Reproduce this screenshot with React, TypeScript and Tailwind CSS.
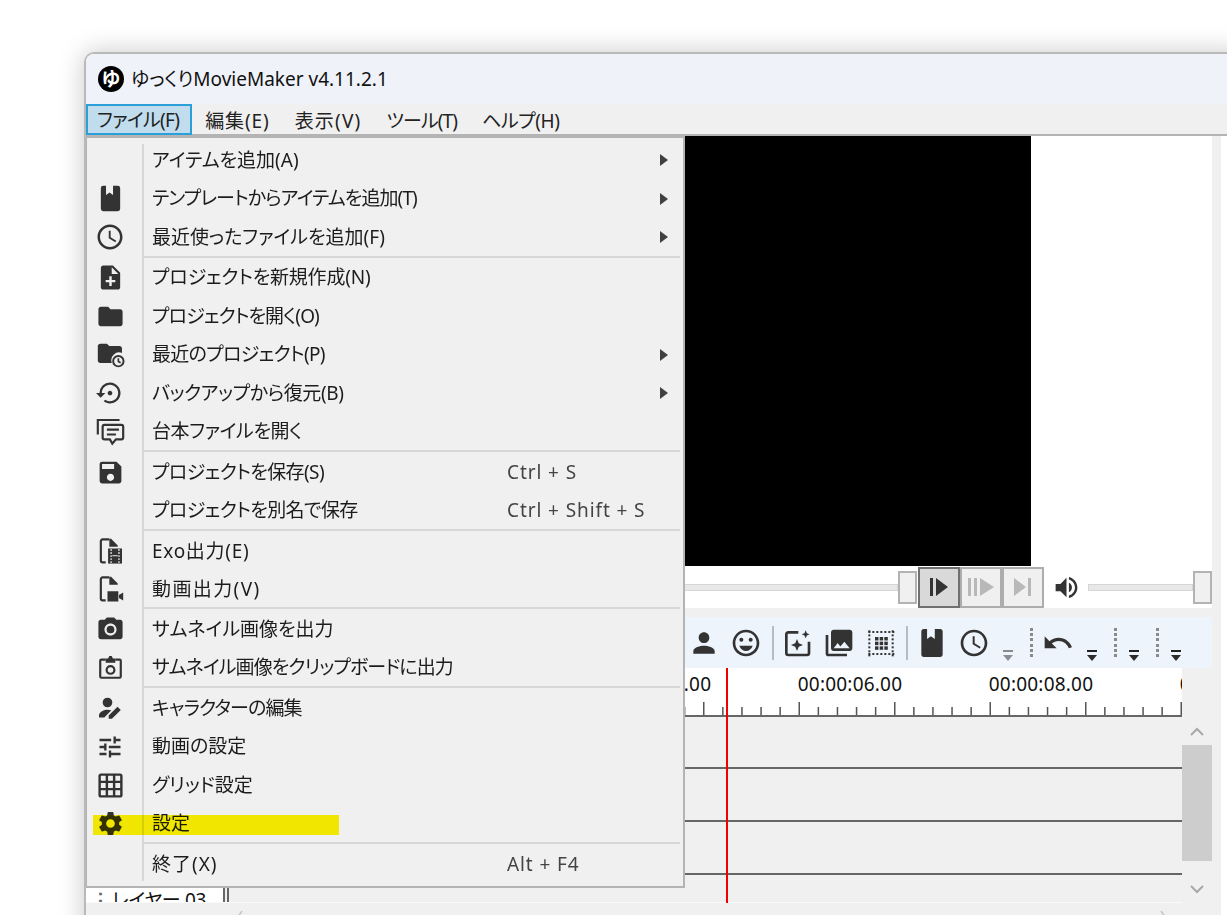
import type { ReactNode } from "react";
import {
  MdAccessTime,
  MdFolder,
  MdGridOn,
  MdNoteAdd,
  MdOutlineEmojiEmotions,
  MdPerson,
  MdPhotoCamera,
  MdPhotoLibrary,
  MdSave,
  MdSettings,
  MdSettingsBackupRestore,
  MdTune,
  MdUndo,
  MdVolumeUp,
} from "react-icons/md";

/* custom icons, 24 grid */
function BookNotch({ size }: { size: number }) {
  return (
    <svg width={size} height={size} viewBox="0 0 24 24" fill="currentColor">
      <path d="M6 1.500h2.300v7.500l2.900-2 2.900 2V1.500H18a2 2 0 0 1 2 2v17a2 2 0 0 1-2 2H6a2 2 0 0 1-2-2v-17a2 2 0 0 1 2-2z" />
    </svg>
  );
}

function FolderClock() {
  return (
    <svg width="29" height="29" viewBox="0 0 24 24" fill="currentColor">
      <path d="M9 3H3.500C2.400 3 1.500 3.900 1.500 5v12c0 1.100.9 2 2 2h9.600a6.500 6.500 0 0 1 8.400-8.300V7c0-1.100-.9-2-2-2h-8.500z" />
      <circle cx="18.500" cy="17.500" r="4.300" fill="none" stroke="currentColor" strokeWidth="1.600" />
      <path d="M18.500 15v2.800l1.900 1.100" fill="none" stroke="currentColor" strokeWidth="1.400" />
    </svg>
  );
}

function ChatLines() {
  return (
    <svg width="29" height="29" viewBox="0 0 24 24" fill="none" stroke="currentColor" strokeWidth="1.800">
      <path d="M19.500 2.500H1.500v12" />
      <path d="M7 6.500h14a1.500 1.500 0 0 1 1.500 1.500v9a1.500 1.500 0 0 1-1.500 1.500h-4.500L13.500 22l-2-3.500H7A1.500 1.500 0 0 1 5.500 17V8A1.500 1.500 0 0 1 7 6.500z" />
      <path d="M9 10.500h10M9 14.500h7.500" />
    </svg>
  );
}

function FileFilm() {
  return (
    <svg width="29" height="29" viewBox="0 0 24 24" fill="none" stroke="currentColor" strokeWidth="1.800">
      <path d="M11 2H5.500A1.500 1.500 0 0 0 4 3.500v16A1.500 1.500 0 0 0 5.500 21H8" />
      <path d="M11 1.500h1.500L18 7v1h-7z" fill="currentColor" stroke="none" />
      <path d="M10 9.500h11.500V22H10z" fill="currentColor" stroke="none" />
      <path d="M12.500 10v12M19 10v12" stroke="#f0f0f0" strokeWidth="1" strokeDasharray="1.500 1" />
      <path d="M13.500 15.500h4.500" stroke="#f0f0f0" strokeWidth="0.800" />
    </svg>
  );
}

function FileCamera() {
  return (
    <svg width="29" height="29" viewBox="0 0 24 24" fill="none" stroke="currentColor" strokeWidth="1.800">
      <path d="M11 2H5.500A1.500 1.500 0 0 0 4 3.500v16A1.500 1.500 0 0 0 5.500 21H8" />
      <path d="M11 1.500h1.500L18 7v1h-7z" fill="currentColor" stroke="none" />
      <path d="M9.500 13.500h9v8.500h-9zM19 16.500l3.500-2v6.500l-3.500-2z" fill="currentColor" stroke="none" />
    </svg>
  );
}

function ClipCamera() {
  return (
    <svg width="29" height="29" viewBox="0 0 24 24" fill="none" stroke="currentColor" strokeWidth="1.800">
      <path d="M8 5.500H4.500a1 1 0 0 0-1 1v13a1 1 0 0 0 1 1h15a1 1 0 0 0 1-1v-13a1 1 0 0 0-1-1H16" />
      <path d="M8 4.500h2l1-2h2l1 2h2V8H8z" fill="currentColor" stroke="none" />
      <circle cx="12" cy="14" r="3.200" />
    </svg>
  );
}

function PersonEdit() {
  return (
    <svg width="29" height="29" viewBox="0 0 24 24" fill="currentColor">
      <circle cx="9.500" cy="7" r="4" />
      <path d="M2.500 19.500v-2c0-2.800 4.400-4.500 7-4.500 1.100 0 2.200.2 3.200.5l-5.800 6z" />
      <path d="M10.500 20.500v-2.700l7.300-7.300 2.700 2.700-7.300 7.300z" />
    </svg>
  );
}

function SparkleBox() {
  return (
    <svg width="32" height="32" viewBox="0 0 24 24" fill="none" stroke="currentColor" strokeWidth="2">
      <path d="M13 4H5.500A1.500 1.500 0 0 0 4 5.500v14A1.500 1.500 0 0 0 5.500 21h14a1.500 1.500 0 0 0 1.500-1.500V11" />
      <path d="M12 9l1.300 3.200 3.200 1.300-3.200 1.300L12 18l-1.300-3.200-3.200-1.300 3.200-1.300zM18.500 2.500l.9 2.100 2.100.9-2.100.9-.9 2.100-.9-2.100-2.100-.9 2.100-.9z" fill="currentColor" stroke="none" />
    </svg>
  );
}

function DotGrid() {
  const cells = [7.5, 11, 14.500];
  const ring = [2.500, 5.500, 8.500, 11.500, 14.500, 17.500, 20.500];
  return (
    <svg width="32" height="32" viewBox="0 0 24 24" fill="currentColor">
      {cells.map((y) => cells.map((x) => <rect key={x + "-" + y} x={x} y={y} width="2.600" height="2.600" />))}
      {ring.map((p) => (
        <g key={p}>
          <rect x={p} y="3" width="1.500" height="1.500" />
          <rect x={p} y="19.500" width="1.500" height="1.500" />
          <rect x="2.500" y={p} width="1.500" height="1.500" />
          <rect x="20" y={p} width="1.500" height="1.500" />
        </g>
      ))}
    </svg>
  );
}

function Arrow() {
  return (
    <svg width="10" height="6" viewBox="0 0 10 6" fill="#2b2b2b" className="block">
      <path d="M0 0h10L5 6z" />
    </svg>
  );
}

function SubArrow() {
  return (
    <svg width="8" height="12" viewBox="0 0 8 12" fill="#404040" className="absolute right-[15px] top-[13px]">
      <path d="M0 0l8 6-8 6z" />
    </svg>
  );
}

type RowProps = { icon?: ReactNode; label: string; fit?: string; shortcut?: string; sub?: boolean; mark?: boolean };

function Row({ icon, label, fit, shortcut, sub, mark }: RowProps) {
  return (
    <div className="relative flex h-[38.5px] items-center">
      <div className="flex w-[46px] shrink-0 items-center justify-center text-[#333]">{icon}</div>
      <div className="w-[19px] shrink-0" />
      <div className={"w-[355px] shrink-0 whitespace-nowrap " + (fit ?? "")}>{label}</div>
      {shortcut && <div className="whitespace-nowrap tracking-[0.9px] text-[#444]">{shortcut}</div>}
      {sub && <SubArrow />}
      {mark && <div className="absolute left-[6px] top-[10px] h-[20px] w-[246px] bg-[#fff500] mix-blend-multiply" />}
    </div>
  );
}

function Sep({ className }: { className?: string }) {
  return <div className={"ml-[56px] mr-[3px] h-[2px] bg-[#d7d7d7] " + (className ?? "-translate-y-px")} />;
}

function FileMenu() {
  return (
    <div className="absolute left-[-1px] top-0 z-20 h-[752px] w-[600px] border-2 border-[#b4b4b4] bg-[#f0f0f0] pt-[3px] text-[19px] leading-none text-[#1c1c1c]">
      <div className="absolute bottom-[5px] left-[55px] top-[6px] w-[2px] bg-[#d7d7d7]" />
      <Row label="アイテムを追加(A)" sub />
      <Row icon={<BookNotch size={29} />} label="テンプレートからアイテムを追加(T)" fit="tracking-[-0.9px]" sub />
      <Row icon={<MdAccessTime size={30} />} label="最近使ったファイルを追加(F)" sub />
      <Sep />
      <Row icon={<MdNoteAdd size={29} />} label="プロジェクトを新規作成(N)" fit="tracking-[-0.2px]" />
      <Row icon={<MdFolder size={29} />} label="プロジェクトを開く(O)" fit="tracking-[-0.9px]" />
      <Row icon={<FolderClock />} label="最近のプロジェクト(P)" fit="tracking-[-0.7px]" sub />
      <Row icon={<MdSettingsBackupRestore size={28} />} label="バックアップから復元(B)" fit="tracking-[-0.4px]" sub />
      <Row icon={<ChatLines />} label="台本ファイルを開く" fit="tracking-[-0.4px]" />
      <Sep />
      <Row icon={<MdSave size={29} />} label="プロジェクトを保存(S)" fit="tracking-[-0.6px]" shortcut="Ctrl + S" />
      <Row label="プロジェクトを別名で保存" fit="tracking-[-0.6px]" shortcut="Ctrl + Shift + S" />
      <Sep />
      <Row icon={<FileFilm />} label="Exo出力(E)" fit="tracking-[0.7px]" />
      <Row icon={<FileCamera />} label="動画出力(V)" fit="tracking-[1.4px]" />
      <Sep className="-translate-y-[2px] mb-[-1px]" />
      <Row icon={<MdPhotoCamera size={29} />} label="サムネイル画像を出力" />
      <Row icon={<ClipCamera />} label="サムネイル画像をクリップボードに出力" fit="tracking-[-0.9px]" />
      <Sep />
      <Row icon={<PersonEdit />} label="キャラクターの編集" fit="tracking-[-0.9px]" />
      <Row icon={<MdTune size={28} />} label="動画の設定" />
      <Row icon={<MdGridOn size={29} />} label="グリッド設定" />
      <Row icon={<MdSettings size={29} />} label="設定" mark />
      <Sep />
      <Row label="終了(X)" fit="tracking-[1px]" shortcut="Alt + F4" />
    </div>
  );
}

function TransportButton({ active, children }: { active?: boolean; children: ReactNode }) {
  return (
    <div
      className={
        active
          ? "flex h-[41px] w-[42px] shrink-0 items-center justify-center border-2 border-[#707070] bg-[#d9d9d9]"
          : "flex h-[41px] w-[42px] shrink-0 items-center justify-center border-2 border-[#adadad] bg-[#f0f0f0]"
      }
    >
      {children}
    </div>
  );
}

function SliderThumb() {
  return <div className="h-[33px] w-[19px] shrink-0 border-2 border-[#b3b3b3] bg-[#f0f0f0]" />;
}

function SliderTrack({ className }: { className: string }) {
  return <div className={"h-[7px] border border-[#d6d6d6] bg-[#e8e8e8] " + className} />;
}

function SeekRow() {
  return (
    <div className="flex h-[42px] items-center bg-white pl-[12px]">
      <SliderTrack className="min-w-0 flex-1" />
      <SliderThumb />
      <div className="w-[1px] shrink-0" />
      <TransportButton active>
        <svg width="18" height="18" viewBox="0 0 18 18" fill="#333">
          <path d="M0 0h3v18H0zM6 0l12 9-12 9z" />
        </svg>
      </TransportButton>
      <TransportButton>
        <svg width="26" height="18" viewBox="0 0 26 18" fill="#b8b8b8">
          <path d="M0 0h3v18H0zM6 0h3v18H6zM12 0l14 9-14 9z" />
        </svg>
      </TransportButton>
      <TransportButton>
        <svg width="18" height="18" viewBox="0 0 18 18" fill="#b8b8b8">
          <path d="M0 0l12 9-12 9zM14 0h3v18h-3z" />
        </svg>
      </TransportButton>
      <div className="flex w-[44px] shrink-0 items-center justify-center text-[#333]">
        <MdVolumeUp size={29} />
      </div>
      <SliderTrack className="w-[105px] shrink-0" />
      <SliderThumb />
    </div>
  );
}

function Grip() {
  return (
    <div className="flex h-[30px] w-[3px] flex-col justify-between">
      {[0, 1, 2, 3, 4, 5].map((n) => (
        <span key={n} className="block h-[3px] w-[3px] bg-[#8a8a8a]" />
      ))}
    </div>
  );
}

function Overflow({ dim, className }: { dim?: boolean; className: string }) {
  return (
    <div className={"flex flex-col items-center self-end pb-[7px] " + className + (dim ? " opacity-50" : "")}>
      <div className="mb-[3px] h-[2px] w-[10px] bg-[#222]" />
      <Arrow />
    </div>
  );
}

function Divider({ className }: { className: string }) {
  return <div className={"h-[34px] w-[2px] shrink-0 bg-[#b5bcc4] " + className} />;
}

function Tool({ children }: { children: ReactNode }) {
  return <div className="flex w-[42px] shrink-0 items-center justify-center">{children}</div>;
}

function Toolbar() {
  return (
    <div className="flex h-[51px] items-center bg-[#eef4fc] pl-[597px] text-[#333]">
      <Tool>
        <MdPerson size={32} />
      </Tool>
      <Tool>
        <MdOutlineEmojiEmotions size={32} />
      </Tool>
      <Divider className="ml-[5px]" />
      <div className="w-[2px]" />
      <Tool>
        <SparkleBox />
      </Tool>
      <Tool>
        <MdPhotoLibrary size={32} />
      </Tool>
      <Tool>
        <DotGrid />
      </Tool>
      <Divider className="ml-[4px]" />
      <div className="w-[3px]" />
      <Tool>
        <BookNotch size={32} />
      </Tool>
      <Tool>
        <MdAccessTime size={32} />
      </Tool>
      <Overflow dim className="ml-[8px]" />
      <div className="w-[17px]" />
      <Grip />
      <div className="w-[4px]" />
      <Tool>
        <MdUndo size={32} />
      </Tool>
      <Overflow className="ml-[8px]" />
      <div className="w-[17px]" />
      <Grip />
      <Overflow className="ml-[12px]" />
      <div className="w-[17px]" />
      <Grip />
      <Overflow className="ml-[12px]" />
    </div>
  );
}

const tickXs = Array.from({ length: 51 }, (_, i) => 139.5 + i * 19.1);

function Ruler() {
  return (
    <div className="relative h-[49px] overflow-hidden border-b-2 border-[#666] bg-white">
      <div className="flex h-[32px] pl-[477.5px] text-[19px] leading-[32px] tracking-[0.2px] text-[#111]">
        {["00:00:04.00", "00:00:06.00", "00:00:08.00", "00:00:10.00"].map((t) => (
          <div key={t} className="w-[191px] shrink-0 whitespace-nowrap text-center">
            {t}
          </div>
        ))}
      </div>
      {/* tick marks */}
      <svg width="1096" height="17" viewBox="0 0 1096 17" className="block">
        {tickXs.map((x, i) => (
          <rect key={i} x={x} y={i % 5 === 0 ? 2 : 7} width="1.500" height={i % 5 === 0 ? 13 : 8} fill="#555" />
        ))}
      </svg>
    </div>
  );
}

function TrackRows() {
  return (
    <div className="flex h-[186px] overflow-hidden border-b border-[#fafafa] bg-[#f0f0f0]">
      <div className="w-[137px] shrink-0">
        {["00", "01", "02", "03"].map((n) => (
          <div key={n} className="flex h-[53px] items-center bg-white pb-[5px] text-[19px] leading-[24px] text-[#111]">
            <span className="ml-[5px] w-[21px] shrink-0 font-bold text-[#666]">⋮</span>
            <span className="whitespace-nowrap tracking-[-0.3px]">レイヤー {n}</span>
          </div>
        ))}
      </div>
      <div className="h-full w-[2px] shrink-0 bg-[#666]" />
      <div className="h-full w-[2px] shrink-0" />
      <div className="h-full w-[2px] shrink-0 bg-[#666]" />
      <div className="-mt-[1px] min-w-0 flex-1">
        {[0, 1, 2].map((n) => (
          <div key={n} className="h-[53px] border-b-2 border-[#666]" />
        ))}
      </div>
    </div>
  );
}

function Chevron({ up }: { up?: boolean }) {
  return (
    <svg width="14" height="9" viewBox="0 0 14 9" fill="none" stroke="#a8a8a8" strokeWidth="2" className="block">
      <path d={up ? "M1 8l6-6 6 6" : "M1 1l6 6 6-6"} />
    </svg>
  );
}

function Timeline() {
  return (
    <div className="flex">
      <div className="relative w-[1096px] shrink-0">
        <Ruler />
        <TrackRows />
        <div className="absolute bottom-0 left-[640px] top-0 w-[2px] bg-[#f00000]" />
      </div>
      <div className="flex w-[30px] shrink-0 flex-col items-center bg-[#f0f0f0] pt-[59px]">
        <Chevron up />
        <div className="mt-[9px] h-[116px] w-full bg-[#cdcdcd]" />
        <div className="mt-[24px]">
          <Chevron />
        </div>
      </div>
    </div>
  );
}

function HScrollHints() {
  return (
    <div className="flex h-[12px] items-start overflow-hidden bg-[#f0f0f0] pl-[150px] pt-[7px]">
      <svg width="8" height="8" viewBox="0 0 8 8" fill="none" stroke="#c4c4c4" strokeWidth="1.500" className="block">
        <path d="M6 1L2 7" />
      </svg>
      <svg width="8" height="8" viewBox="0 0 8 8" fill="none" stroke="#c4c4c4" strokeWidth="1.500" className="ml-[915px] block">
        <path d="M2 1l4 6" />
      </svg>
    </div>
  );
}

export default function App() {
  return (
    <div className="h-[915px] w-[1227px] overflow-hidden bg-white pl-[84px] pt-[52px] font-['Noto_Sans','Noto_Sans_CJK_JP',sans-serif] [font-feature-settings:'palt']">
      <div className="h-[900px] w-[1160px] overflow-hidden rounded-tl-[10px] border-l-2 border-t-2 border-[#b9b9b9] shadow-[0_0_26px_rgba(0,0,0,0.22)]">
        {/* title bar */}
        <div className="flex h-[50px] items-center bg-[#eff2f9] pl-[12px]">
          <div className="flex h-[26px] w-[26px] shrink-0 items-center justify-center rounded-full bg-black text-[19px] font-bold leading-none text-white">
            ゆ
          </div>
          <div className="ml-[7px] whitespace-nowrap text-[19px] leading-none text-[#111]">ゆっくりMovieMaker v4.11.2.1</div>
        </div>
        {/* menu bar */}
        <div className="flex h-[32px] items-start gap-[3px] border-b-2 border-[#b4b4b4] bg-[#f0f0f0] text-[19px] leading-none text-[#222]">
          <div className="flex h-[31px] items-center border-2 border-[#2a9fd8] bg-[#c0dced] pl-[9px] pr-[11px] pt-[2px] tracking-[-0.7px]">ファイル(F)</div>
          <div className="flex h-[31px] items-center pl-[10px] pr-[11px] pt-[4px] tracking-[0.9px]">編集(E)</div>
          <div className="flex h-[31px] items-center px-[11px] pt-[4px] tracking-[1.2px]">表示(V)</div>
          <div className="flex h-[31px] items-center px-[11px] pt-[4px] tracking-[-0.9px]">ツール(T)</div>
          <div className="flex h-[31px] items-center px-[11px] pt-[4px] tracking-[-0.4px]">ヘルプ(H)</div>
        </div>
        {/* body */}
        <div className="relative flex bg-white">
          <div className="w-[1126px] shrink-0">
            <div className="flex h-[430px] justify-center bg-white">
              <div className="h-full w-[764px] bg-black" />
            </div>
            <SeekRow />
            <div className="h-[9px] bg-[#f0f0f0]" />
            <Toolbar />
            <Timeline />
            <HScrollHints />
          </div>
          <div className="w-[9px] shrink-0 bg-[#f0f0f0]" />
          <FileMenu />
        </div>
      </div>
    </div>
  );
}
